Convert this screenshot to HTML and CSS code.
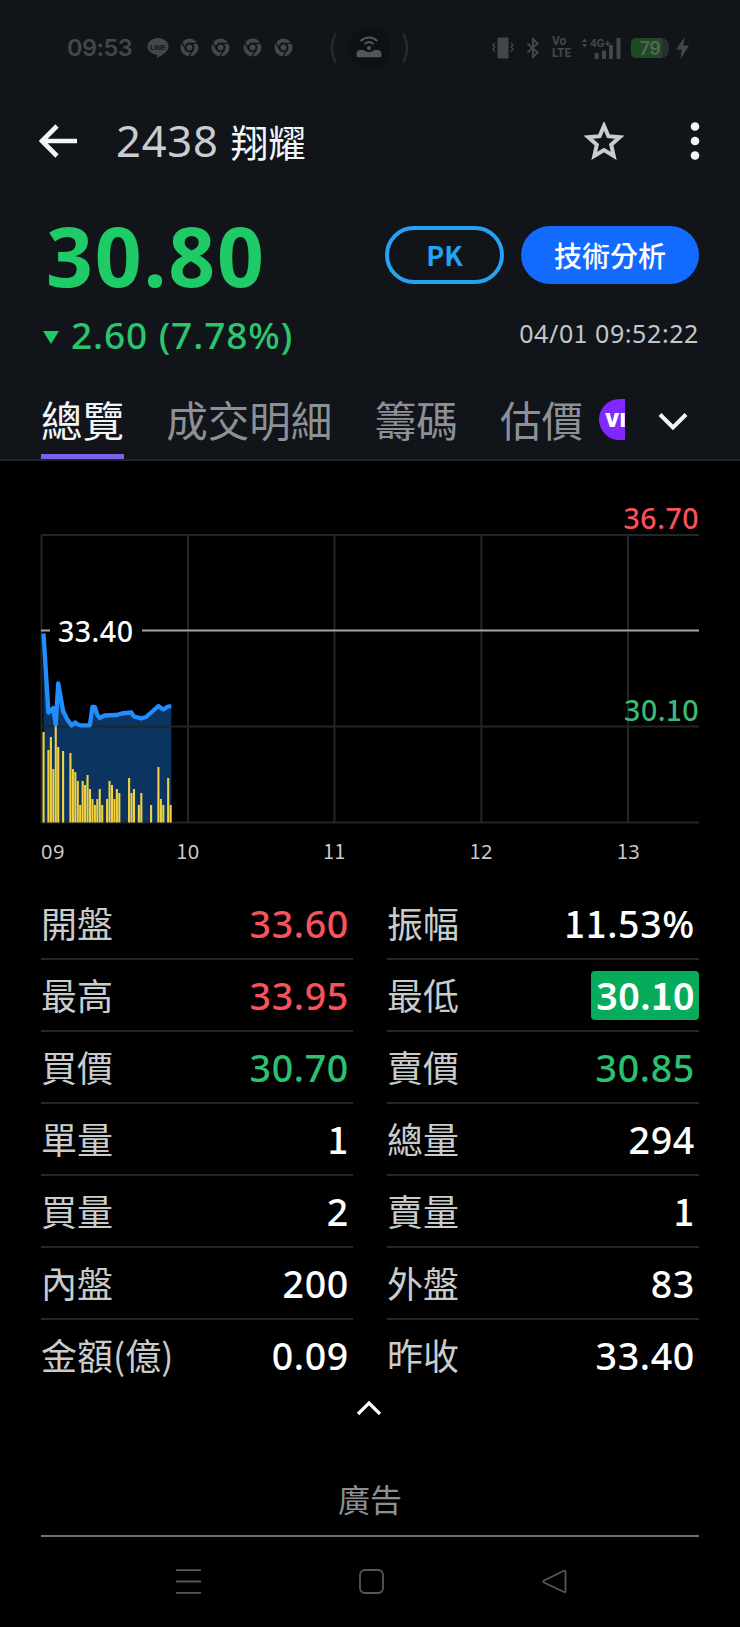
FILE: index.html
```html
<!DOCTYPE html>
<html lang="zh-Hant">
<head>
  <meta charset="UTF-8">
  <meta name="viewport" content="width=device-width, initial-scale=1.0">
  <title>2438 翔耀</title>
  <link rel="stylesheet" href="styles.css">
</head>
<body>
  <div class="top">
    <!-- Status bar -->
    <div class="status-bar">
      <span class="clock">09:53</span>
      <svg class="line-icon" width="22" height="22" viewBox="0 0 22 22">
        <path d="M11 1C5 1 .5 4.700.5 9.500c0 4.200 3.800 7.500 9 8.200.7.200.9.500.8 1.100l-.3 2.200c3.500-1.600 11.500-6 11.500-11.500C21.500 4.700 17 1 11 1z" fill="#42474a"/>
        <text x="11" y="12.500" text-anchor="middle" class="line-text">LINE</text>
      </svg>
      <svg class="chrome" width="19" height="19" viewBox="0 0 19 19"><use href="#chrome"/></svg>
      <svg class="chrome" width="19" height="19" viewBox="0 0 19 19"><use href="#chrome"/></svg>
      <svg class="chrome" width="19" height="19" viewBox="0 0 19 19"><use href="#chrome"/></svg>
      <svg class="chrome" width="19" height="19" viewBox="0 0 19 19">
        <g id="chrome" fill="none" stroke="#42474a">
          <circle cx="9.500" cy="9.500" r="7" stroke-width="4"/>
          <g stroke="#111519" stroke-width="1.300">
            <path d="M9.500 5.300H18M5.900 11.600L1.600 4.300M13.100 11.600L8.800 19"/>
          </g>
          <circle cx="9.500" cy="9.500" r="3.500" fill="#42474a" stroke="#111519" stroke-width="1"/>
        </g>
      </svg>
      <svg class="hotspot" width="82" height="44" viewBox="0 0 82 44">
        <g fill="none" stroke="#25292d" stroke-width="2.500">
          <path d="M7 7Q-1 22 7 37M74 7Q82 22 74 37"/>
        </g>
        <circle cx="40" cy="22" r="21" fill="#0c1115"/>
        <path d="M27.500 30v-2q0-4 4-4h3q5.500 4.500 11 0h3q4 0 4 4v2q0 1.200-1.200 1.200H28.700q-1.200 0-1.200-1.200z" fill="#50565a"/>
        <circle cx="40" cy="22" r="2" fill="#50565a"/>
        <path d="M35.500 18q4.500-4 9 0M31.500 15q8.500-7 17 0" fill="none" stroke="#50565a" stroke-width="1.800"/>
      </svg>
      <div class="status-right">
        <svg width="22" height="22" viewBox="0 0 22 22">
          <rect x="5.500" y="0.500" width="11" height="21" rx="1.200" fill="#42474a"/>
          <path d="M3 6l-2 2 2 2-2 2 2 3M19 6l2 2-2 2 2 2-2 3" fill="none" stroke="#42474a" stroke-width="1.300"/>
        </svg>
        <svg class="bt" width="14" height="22" viewBox="0 0 14 22">
          <path d="M1.500 6.500l10 9L7 20V2l4.500 4.500-10 9" fill="none" stroke="#42474a" stroke-width="2"/>
        </svg>
        <div class="volte">Vo<br>LTE</div>
        <svg class="signal" width="40" height="24" viewBox="0 0 40 24">
          <path d="M1 6l2.500-3.500L6 6zM1 8l2.500 3.500L6 8z" fill="#42474a"/>
          <text x="9" y="11" class="net">4G+</text>
          <path d="M13.500 17h4v6h-4zM21 14.500h4V23h-4zM28 9h4V23h-4zM35.500 2h4v21h-4z" fill="#42474a"/>
        </svg>
        <div class="battery">79</div>
        <svg class="bolt" width="13" height="22" viewBox="0 0 13 22">
          <path d="M8.500 0L0 12.500h5.500L4.500 22 13 8.500H7.500z" fill="#42474a"/>
        </svg>
      </div>
    </div>

    <!-- Title -->
    <div class="title-bar">
      <svg class="back" width="38" height="34" viewBox="0 0 38 34">
        <path d="M18 2L3 17l15 15M3 17h35" fill="none" stroke="#f3f5f9" stroke-width="4.600"/>
      </svg>
      <h1><span class="code">2438</span>翔耀</h1>
      <svg class="star" width="40" height="38" viewBox="0 0 40 38">
        <path d="M20 3.800l4.400 10.400 11.300 1-8.500 7.500 2.500 11.200L20 28l-9.700 5.900 2.500-11.200-8.500-7.500 11.300-1z" fill="none" stroke="#c9cdd2" stroke-width="4"/>
      </svg>
      <svg class="more" width="10" height="38" viewBox="0 0 10 38">
        <g fill="#f3f5f9"><circle cx="5" cy="4.500" r="4.300"/><circle cx="5" cy="19" r="4.300"/><circle cx="5" cy="33.500" r="4.300"/></g>
      </svg>
    </div>

    <!-- Price -->
    <div class="price-row">
      <div class="price">30.80</div>
      <button class="btn pk">PK</button>
      <button class="btn analysis">技術分析</button>
    </div>
    <div class="change-row">
      <svg class="down" width="16" height="13" viewBox="0 0 16 13"><path d="M0 0h16L8 13z" fill="#1fcb66"/></svg>
      <span class="change">2.60 (7.78%)</span>
      <span class="time">04/0<i>1</i> 09:52:22</span>
    </div>

    <!-- Tabs -->
    <div class="tab-bar">
      <div class="tabs">
        <div class="tab active">總覽</div>
        <div class="tab">成交明細</div>
        <div class="tab">籌碼</div>
        <div class="tab">估價</div>
        <div class="vip">VIP</div>
      </div>
      <svg class="expand" width="30" height="20" viewBox="0 0 30 20">
        <path d="M2 2.500l13 13 13-13" fill="none" stroke="#f3f5f9" stroke-width="4"/>
      </svg>
    </div>
  </div>

  <!-- Chart -->
  <svg class="chart" width="740" height="426" viewBox="0 0 740 426">
    <path class="area" id="area"/>
    <path class="grid" d="M41 74H699M41 265.500H699M41 361.500H699M41.500 74V361M188 74V361M334.500 74V361M481.300 74V361M628 74V361"/>
    <path class="base" d="M41 169.500H50M142 169.500H699"/>
    <g id="bars"></g>
    <path class="line" id="line"/>
    <text x="58" y="180.500" class="value white">33.40</text>
    <text x="699" y="67.500" class="value red end">36.70</text>
    <text x="699" y="259.500" class="value green end">30.<tspan class="one">1</tspan>0</text>
    <text x="41" y="398" class="hour">09</text>
    <text x="188" y="398" class="hour mid"><tspan class="one">1</tspan>0</text>
    <text x="334.500" y="398" class="hour mid"><tspan class="one">11</tspan></text>
    <text x="481.300" y="398" class="hour mid"><tspan class="one">1</tspan>2</text>
    <text x="628.500" y="398" class="hour mid"><tspan class="one">1</tspan>3</text>
  </svg>

  <!-- Quote table -->
  <div class="quotes">
    <div class="row"><span>開盤</span><b class="red">33.60</b></div>
    <div class="row"><span>振幅</span><b><i>11</i>.53%</b></div>
    <div class="row"><span>最高</span><b class="red">33.95</b></div>
    <div class="row"><span>最低</span><b class="low">30.<i>1</i>0</b></div>
    <div class="row"><span>買價</span><b class="green">30.70</b></div>
    <div class="row"><span>賣價</span><b class="green">30.85</b></div>
    <div class="row"><span>單量</span><b><i>1</i></b></div>
    <div class="row"><span>總量</span><b>294</b></div>
    <div class="row"><span>買量</span><b>2</b></div>
    <div class="row"><span>賣量</span><b><i>1</i></b></div>
    <div class="row"><span>內盤</span><b>200</b></div>
    <div class="row"><span>外盤</span><b>83</b></div>
    <div class="row"><span>金額(億)</span><b>0.09</b></div>
    <div class="row"><span>昨收</span><b>33.40</b></div>
  </div>
  <div class="collapse">
    <svg width="26" height="16" viewBox="0 0 26 16">
      <path d="M2 14L13 3l11 11" fill="none" stroke="#fff" stroke-width="3.200"/>
    </svg>
  </div>
  <div class="ad">廣告</div>

  <!-- Navigation -->
  <div class="nav">
    <svg width="26" height="26" viewBox="0 0 26 26"><path d="M0 1.200h25M0 12.500h25M0 23.800h25"/></svg>
    <svg width="26" height="26" viewBox="0 0 26 26"><rect x="1" y="1" width="23" height="23" rx="5"/></svg>
    <svg width="26" height="26" viewBox="0 0 26 26"><path d="M22 1.800L2 11.500q-1.500 1 0 2L22 23q1.500.5 1.500-1V3q0-1.700-1.500-1.200z"/></svg>
  </div>

  <script>
    const startX = 43.5;
    const step = 2.444; // px per minute
    const bottom = 361;

    // [minute, y]
    const points = [[0, 172.5], [2, 251.5], [3, 249.5], [4, 247], [5, 263.5], [6, 222.500], [8, 250], [9.5, 257.5],
      [11.5, 264.500], [13, 261.5], [14, 263.5], [15, 264.3], [19, 264.3], [20, 246], [21, 246], [22, 254], [23, 257],
      [25, 254.500], [30, 254], [32, 252.5], [36, 251.5], [37, 255.5], [40, 257.3], [42, 256], [47, 245], [49, 248.5],
      [51, 245.5], [52.3, 245]];

    // [minute, bar height]
    const volumes = [[0, 90], [2, 72], [3, 85], [4, 53], [5, 96], [6, 75], [8, 71], [11, 69], [12, 53], [13, 50],
      [14, 41], [15, 17], [16, 41], [17, 37], [18, 47], [19, 33], [20, 23], [21, 17], [22, 23], [23, 33], [24, 17],
      [26, 23], [27, 41], [28, 37], [29, 23], [30, 33], [31, 29], [35, 44], [36, 29], [37, 33], [39, 17], [40, 29],
      [44, 17], [47, 55], [48, 23], [49, 17], [51, 44], [52, 17]];

    const path = points.map(p => (startX + p[0] * step).toFixed(1) + ' ' + p[1]).join('L');
    document.getElementById('line').setAttribute('d', 'M' + path);
    document.getElementById('area').setAttribute('d', 'M' + path + 'V' + bottom + 'H' + startX + 'Z');

    volumes.forEach(([minute, height]) => {
      const bar = document.createElementNS('http://www.w3.org/2000/svg', 'rect');
      bar.setAttribute('x', startX - 1 + minute * step);
      bar.setAttribute('y', bottom - height);
      bar.setAttribute('width', 2.1);
      bar.setAttribute('height', height + 0.5);
      document.getElementById('bars').appendChild(bar);
    });
  </script>
</body>
</html>
```
FILE: styles.css
```css
* {
  box-sizing: border-box;
}

body {
  margin: 0;
  width: 740px;
  height: 1627px;
  overflow: hidden;
  background: #000;
  color: #fff;
  font-family: "Noto Sans", "Noto Sans CJK TC", sans-serif;
}

svg {
  display: block;
  flex-shrink: 0;
}

/* digit one with a foot */
i, .one {
  font-family: "Noto Sans CJK TC", sans-serif;
  font-style: normal;
  font-size: 0.97em;
  line-height: 1;
}

.top {
  height: 461px;
  background: #111519;
  border-bottom: 2px solid #202327;
}

/* Status bar */
.status-bar {
  height: 95px;
  display: flex;
  align-items: center;
  padding-left: 67px;
}

.clock {
  width: 65px;
  margin-right: 15px;
  font-family: Inter, sans-serif;
  font-size: 23.500px;
  font-weight: 600;
  letter-spacing: -0.500px;
  color: #42474a;
}

.line-text {
  font: bold 7px "Liberation Sans", sans-serif;
  fill: #111519;
}

.chrome {
  margin-left: 12.300px;
}

.line-icon + .chrome {
  margin-left: 11px;
}

.hotspot {
  margin-left: 36px;
}

.status-right {
  display: flex;
  align-items: center;
  margin-left: 81px;
  color: #42474a;
}

.bt {
  margin-left: 12px;
}

.volte {
  width: 20px;
  margin-left: 12px;
  font: 700 12px/11.500px Roboto, sans-serif;
}

.signal {
  margin-left: 9px;
}

.net {
  font: 700 11.500px Roboto, sans-serif;
  fill: #42474a;
}

.battery {
  width: 38px;
  height: 20px;
  margin-left: 10px;
  border-radius: 5px 8px 8px 5px;
  background: linear-gradient(to right, #1c4a22 31px, #2a2f32 31px);
  color: #5b625d;
  font: 600 18px/21px Inter, sans-serif;
  letter-spacing: -0.500px;
  text-align: center;
}

.bolt {
  margin-left: 7px;
}

/* Title */
.title-bar {
  height: 92px;
  display: flex;
  align-items: center;
  padding-left: 39px;
}

h1 {
  width: 430px;
  margin: 0 0 0 39px;
  font-size: 37.500px;
  font-weight: 400;
  line-height: 60px;
  color: #f3f5f9;
}

.code {
  margin-right: 12px;
  font-size: 43.500px;
  letter-spacing: 0.800px;
  color: #c9cdd2;
}

.star {
  margin-left: 38px;
}

.more {
  margin-left: 66px;
}

/* Price */
.price-row {
  display: flex;
  align-items: center;
  height: 135px;
  padding: 0 41px 0 46px;
}

.price {
  flex: 1;
  font-size: 82px;
  font-weight: 700;
  letter-spacing: 1.800px;
  line-height: 100px;
  color: #1fcb66;
}

.btn {
  height: 58px;
  margin: 0;
  padding: 0;
  border: none;
  border-radius: 29px;
  font-family: "Noto Sans CJK TC", sans-serif;
  font-size: 28px;
  font-weight: 500;
}

.pk {
  width: 119px;
  border: 4px solid #25a3f2;
  background: none;
  color: #25a3f2;
  font-size: 27px;
  font-weight: 700;
}

.analysis {
  width: 178px;
  margin-left: 17px;
  background: #126aff;
  color: #fff;
}

.change-row {
  display: flex;
  align-items: center;
  height: 50px;
  margin-top: -13px;
  padding: 0 41px 0 43px;
}

.down {
  margin-top: 6px;
}

.change {
  flex: 1;
  margin-left: 12px;
  font-size: 37px;
  font-weight: 500;
  letter-spacing: 0.900px;
  color: #2bc56f;
}

.time {
  margin-top: -3px;
  font-size: 25px;
  letter-spacing: 0.600px;
  color: #c3c7cb;
}

/* Tabs */
.tab-bar {
  display: flex;
  height: 100px;
  padding-left: 41px;
}

.tabs {
  width: 584px;
  display: flex;
  gap: 42.300px;
  overflow: hidden;
}

.tab {
  flex-shrink: 0;
  font-family: "Noto Sans CJK TC", sans-serif;
  font-size: 41.500px;
  line-height: 121px;
  color: #8c9097;
}

.tab.active {
  color: #f3f5f9;
  border-bottom: 5px solid #7a62e8;
}

.vip {
  flex-shrink: 0;
  width: 62px;
  height: 41px;
  margin: 40px 0 0 -26px;
  padding-left: 6px;
  border-radius: 21px;
  background: #8127ff;
  font-family: "Open Sans", sans-serif;
  font-size: 20px;
  font-weight: 800;
  line-height: 42px;
}

.expand {
  margin: 53px 0 0 33px;
}

/* Chart */
.grid {
  stroke: #222527;
  stroke-width: 2;
}

.base {
  stroke: #a6a5ad;
  stroke-width: 2;
}

.area {
  fill: #0b3560;
}

.line {
  fill: none;
  stroke: #218eff;
  stroke-width: 4.300;
  stroke-linejoin: round;
}

#bars {
  fill: #f2d140;
}

.value {
  font-size: 28.500px;
  font-weight: 500;
  letter-spacing: 0.500px;
}

.hour {
  font-size: 20px;
  letter-spacing: 0.500px;
  fill: #c8cacd;
}

.mid {
  text-anchor: middle;
}

.end {
  text-anchor: end;
}

.white {
  fill: #fff;
}

.red {
  color: #f8525d;
  fill: #f8525d;
}

.green {
  color: #2dc073;
  fill: #3cba78;
}

/* Quote table */
.quotes {
  display: grid;
  grid-template-columns: 312px 312px;
  column-gap: 34px;
  padding: 0 41px;
  grid-auto-rows: 72px;
  margin-top: 1px;
}

.row {
  display: flex;
  align-items: center;
  justify-content: space-between;
  border-bottom: 2px solid #242627;
}

.row:nth-last-child(-n+2) {
  border-bottom-color: transparent;
}

.row span {
  padding-bottom: 2px;
  font-family: "Noto Sans CJK TC", sans-serif;
  font-size: 36px;
  line-height: 50px;
  color: #c9cccd;
}

.row b {
  padding: 0 4px 0 5px;
  font-size: 37.500px;
  font-weight: 500;
  line-height: 49px;
  letter-spacing: 0.700px;
}

.row b.low {
  border-radius: 4px;
  background: #06ac5c;
  font-weight: 600;
  letter-spacing: 0.500px;
}

.collapse {
  display: flex;
  justify-content: center;
  padding: 8px 2px 0 0;
  height: 57px;
}

/* Ad */
.ad {
  width: 658px;
  height: 88px;
  margin: 0 auto;
  border-bottom: 2px solid #717374;
  text-align: center;
  font-size: 32px;
  line-height: 101px;
  color: #8b8f91;
}

/* Navigation */
.nav {
  display: flex;
  gap: 157px;
  padding: 32px 0 0 176px;
  fill: none;
  stroke: #55585a;
  stroke-width: 1.800;
}
```
